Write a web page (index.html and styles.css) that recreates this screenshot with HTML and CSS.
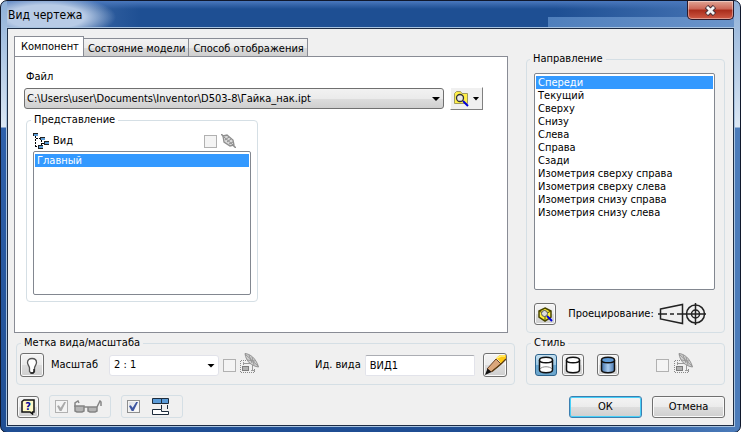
FILE: index.html
```
<!DOCTYPE html>
<html lang="ru">
<head>
    <meta charset="UTF-8">
    <meta name="viewport" content="width=device-width, initial-scale=1.0">
    <title>Вид чертежа</title>
    <link rel="stylesheet" href="styles.css">
</head>
<body>
    <!-- Shared icons -->
    <svg class="sprite" aria-hidden="true">
        <symbol id="icon-scale-link" viewBox="0 0 20 20">
            <path d="M1 7.500H6M1 19.500H15M.5 8V20M14.500 16V20" fill="none" stroke="#8a8a8a" stroke-dasharray="1 1"/>
            <path d="M3 10.500H11M3.500 9V12M12.500 11V18M11 17.500H15" fill="none" stroke="#9a9a9a"/>
            <rect x="2.500" y="13.500" width="6" height="4" fill="#b0b0b0" stroke="#7c7c7c"/>
            <path d="M5 .5C10 1 16 5 18.500 14C12 13 6 9 5 .5Z" fill="#d0d0d0" stroke="#929292"/>
            <path d="M5 1L18 13M9 2L12 10M12 4L14 12M7 7L15 8" fill="none" stroke="#989898"/>
        </symbol>
    </svg>

    <div class="window">
        <header class="titlebar">
            <h1>Вид чертежа</h1>
            <button class="close" type="button" aria-label="Закрыть">
                <svg width="13" height="11" viewBox="0 0 13 11">
                    <path d="M2.500 1.500L10.500 9.500M10.500 1.500L2.500 9.500" stroke="#4a3038" stroke-width="4.800"/>
                    <path d="M3 2L10 9M10 2L3 9" stroke="#f4f4f4" stroke-width="2.800"/>
                </svg>
            </button>
        </header>

        <form class="client">
            <section class="pages">
                <div class="tabs" role="tablist">
                    <button class="tab active" type="button" role="tab" aria-selected="true">Компонент</button>
                    <button class="tab" type="button" role="tab" aria-selected="false">Состояние модели</button>
                    <button class="tab" type="button" role="tab" aria-selected="false">Способ отображения</button>
                </div>
                <div class="page" role="tabpanel">
                    <label class="file-label" for="file">Файл</label>
                    <div class="file-row">
                        <div class="dropdown file">
                            <select id="file">
                                <option>C:\Users\user\Documents\Inventor\D503-8\Гайка_нак.ipt</option>
                            </select>
                        </div>
                        <button class="browse" type="button" aria-label="Обзор">
                            <svg width="15" height="16" viewBox="0 0 15 16">
                                <path d="M.5 12.500V2.500L2.500 .5H6.500L8 2.500H13.500V12.500Z" fill="#fff04a" stroke="#a09a60"/>
                                <circle cx="6" cy="7" r="3.500" fill="#e8e8e8" stroke="#333" stroke-width="1.300"/>
                                <path d="M9 10L14 15" stroke="#0000d8" stroke-width="2"/>
                            </svg>
                            <span class="arrow"></span>
                        </button>
                    </div>
                    <fieldset class="views">
                        <legend>Представление</legend>
                        <div class="views-head">
                            <svg width="16" height="16" viewBox="0 0 16 16">
                                <path d="M2.500 3V14.500M2 13.500H5M3 5.500H7M8.500 7V12M9 10.500H11" fill="none" stroke="#000" stroke-dasharray="2 1"/>
                                <path d="M0 0H5V3H0ZM7 4H12V7H7ZM11 8H16V12H11ZM5 12H10V16H5Z" fill="#222"/>
                                <path d="M1 1H5V3H1ZM8 5H12V7H8ZM12 9H16V11H12ZM6 13H10V15H6Z" fill="#5b9bd5"/>
                            </svg>
                            <label for="views">Вид</label>
                            <input class="push" type="checkbox" aria-label="Ассоциативно" disabled>
                            <svg width="15" height="14" viewBox="0 0 15 14">
                                <path d="M0 0L15 14" stroke="#8f8f8f" stroke-width="1.500"/>
                                <path d="M2 2L6 1L12 6L13 11L9 12L3 8Z" fill="#d8d8d8" stroke="#8f8f8f" stroke-width="1.300"/>
                                <path d="M3 3L12 11M4 6L8 3M6 8L10 5M8 10L12 8" stroke="#8f8f8f"/>
                            </svg>
                        </div>
                        <select class="list" id="views" size="2">
                            <option selected>Главный</option>
                        </select>
                    </fieldset>
                </div>
            </section>

            <fieldset class="direction">
                <legend>Направление</legend>
                <select class="list" size="11" aria-label="Направление">
                    <option selected>Спереди</option>
                    <option>Текущий</option>
                    <option>Сверху</option>
                    <option>Снизу</option>
                    <option>Слева</option>
                    <option>Справа</option>
                    <option>Сзади</option>
                    <option>Изометрия сверху справа</option>
                    <option>Изометрия сверху слева</option>
                    <option>Изометрия снизу справа</option>
                    <option>Изометрия снизу слева</option>
                </select>
                <div class="projection">
                    <button class="tool" type="button" aria-label="Изменить ориентацию вида">
                        <svg width="15" height="15" viewBox="0 0 15 15">
                            <path d="M7 1L13 4V10L7 14L1 10V4Z" fill="#ffef3a" stroke="#4a4600" stroke-width="1.500"/>
                            <path d="M1 4L7 7L13 4M7 7V14" fill="none" stroke="#4a4600"/>
                            <circle cx="6.500" cy="6.500" r="3" fill="#ddd" stroke="#555"/>
                            <path d="M9 9L14 14" stroke="#0000d8" stroke-width="2"/>
                        </svg>
                    </button>
                    <span>Проецирование:</span>
                    <svg width="48" height="22" viewBox="0 0 48 22" fill="none" stroke="#222" stroke-width="1.500">
                        <path d="M2.500 6L24.500 1.500V20.500L2.500 16Z"/>
                        <path d="M0 11H9M12 11H16M19 11H48M37.500 0V22"/>
                        <circle cx="37.500" cy="11" r="9"/>
                        <circle cx="37.500" cy="11" r="4"/>
                    </svg>
                </div>
            </fieldset>

            <fieldset class="labels">
                <legend>Метка вида/масштаба</legend>
                <div class="row">
                    <button class="tool big" type="button" aria-label="Видимость метки">
                        <svg width="12" height="17" viewBox="0 0 12 17">
                            <path d="M3.500 11C3.500 9 1.500 8 1.500 5.500C1.500 3 3.500 1.500 6 1.500S10.500 3 10.500 5.500C10.500 8 8.500 9 8.500 11V14.500L7 16H5L3.500 14.500Z" fill="#fff" stroke="#555" stroke-width="1.300"/>
                            <path d="M8 12V15L7 16H4.500" fill="none" stroke="#222" stroke-width="1.500"/>
                        </svg>
                    </button>
                    <label class="scale-label" for="scale">Масштаб</label>
                    <div class="dropdown scale">
                        <select id="scale">
                            <option>2 : 1</option>
                        </select>
                    </div>
                    <input class="scale-check" type="checkbox" aria-label="Масштаб по базовому виду" disabled>
                    <svg class="link-icon" width="20" height="20"><use href="#icon-scale-link"/></svg>
                    <label class="id-label" for="viewId">Ид. вида</label>
                    <input class="view-id" id="viewId" type="text" value="ВИД1">
                    <button class="tool big" type="button" aria-label="Редактировать метку">
                        <svg width="22" height="22" viewBox="0 0 22 22">
                            <path d="M3 15L12 5L17 10L7 18Z" fill="#dba77c" stroke="#6b4428"/>
                            <path d="M1 21L3.500 14.500L7.500 18Z" fill="#111"/>
                            <path d="M12 5C13 3 15 1 17 1H22V5L17 10C16 7 14 5 12 5Z" fill="#ffc814"/>
                            <path d="M22 5L17 10L8 17.500" fill="none" stroke="#5a3a10" stroke-width="1.300"/>
                            <path d="M13 4L17 2H21" fill="none" stroke="#fff07a" stroke-width="1.500"/>
                        </svg>
                    </button>
                </div>
            </fieldset>

            <fieldset class="style">
                <legend>Стиль</legend>
                <div class="row">
                    <button class="tool pressed" type="button" aria-label="Невидимые линии показаны" aria-pressed="true">
                        <svg width="16" height="18" viewBox="0 0 16 18" stroke="#111" stroke-width="1.500">
                            <path d="M1.500 4V14C1.500 17.500 14.500 17.500 14.500 14V4" fill="#fff"/>
                            <path d="M2 13C4 10 12 10 14 13" fill="none" stroke="#888" stroke-width="1"/>
                            <ellipse cx="8" cy="4" rx="6.500" ry="2.800" fill="#fff"/>
                        </svg>
                    </button>
                    <button class="tool" type="button" aria-label="Невидимые линии удалены" aria-pressed="false">
                        <svg width="16" height="18" viewBox="0 0 16 18" stroke="#111" stroke-width="1.500">
                            <path d="M1.500 4V14C1.500 17.500 14.500 17.500 14.500 14V4" fill="#fff"/>
                            <ellipse cx="8" cy="4" rx="6.500" ry="2.800" fill="#fff"/>
                        </svg>
                    </button>
                    <button class="tool shaded" type="button" aria-label="Тонированный" aria-pressed="false">
                        <svg width="16" height="18" viewBox="0 0 16 18" stroke="#111" stroke-width="1.500">
                            <linearGradient id="steel">
                                <stop offset="0" stop-color="#3f6fa8"/>
                                <stop offset=".5" stop-color="#a9cbee"/>
                                <stop offset="1" stop-color="#4678b2"/>
                            </linearGradient>
                            <path d="M1.500 4V14C1.500 17.500 14.500 17.500 14.500 14V4" fill="url(#steel)"/>
                            <ellipse cx="8" cy="4" rx="6.500" ry="2.800" fill="#5f9ad6"/>
                        </svg>
                    </button>
                    <input class="push" type="checkbox" aria-label="Стиль по базовому виду" disabled>
                    <svg class="link-icon" width="20" height="20"><use href="#icon-scale-link"/></svg>
                </div>
            </fieldset>

            <footer class="footer">
                <button class="tool" type="button" aria-label="Справка">
                    <svg width="15" height="16" viewBox="0 0 15 16">
                        <path d="M1 2.500L3 1H13V13H11.500V15L9 13H1Z" fill="#fffbc8" stroke="#111" stroke-width="1.500"/>
                        <text x="7" y="11" text-anchor="middle">?</text>
                    </svg>
                </button>
                <div class="option">
                    <input type="checkbox" aria-label="Предварительный просмотр" checked disabled>
                    <svg width="28" height="14" viewBox="0 0 28 14" fill="#b4b4b4" stroke="#858585" stroke-width="1.500">
                        <path d="M1 7V3L4 1L5 3M23 7L26 1L27 2V6" fill="none"/>
                        <path d="M1 6H10V11L8 12H3L1 11ZM14 7H23V11L21 12H16L14 11ZM10 7H14"/>
                    </svg>
                </div>
                <div class="option second">
                    <input type="checkbox" aria-label="Базовый вид" checked>
                    <svg width="17" height="17" viewBox="0 0 17 17" fill="#5a9bd8" stroke="#1d2c3c">
                        <path d="M.5 .5H9.500V5.500H.5ZM9.500 .5H16.500V5.500H9.500Z"/>
                        <path d="M9.500 7V11M15.500 7V11" fill="none"/>
                        <path d="M.5 11.500H9.500V13.500H16.500V16.500H.5Z" fill="#fff"/>
                    </svg>
                </div>
                <button class="push command default" type="submit">ОК</button>
                <button class="command" type="button">Отмена</button>
            </footer>
        </form>
    </div>
</body>
</html>
```
FILE: styles.css
```
* {
    box-sizing: border-box;
}

body {
    margin: 0;
    background-color: #fff;
    color: #000;
}

body,
button,
input,
select {
    font-family: "DejaVu Sans Condensed", "Open Sans", sans-serif;
    font-size: 11px;
    line-height: 14px;
}

button {
    display: flex;
    align-items: center;
    justify-content: center;
    padding: 0;
    color: #000;
}

.sprite {
    position: absolute;
    width: 0;
    height: 0;
}

/* Window frame */
.window {
    display: flex;
    flex-direction: column;
    min-height: 100vh;
    padding: 0 6px 6px;
    border: 1px solid #10182c;
    border-radius: 7px;
    background:
        linear-gradient(#8fb0d8, #dbe7f4 126px, #2f61ab 127px, #1f4e93) left / 6px 100% no-repeat,
        linear-gradient(#8fb0d8, #dbe7f4 126px, #4c7cba 127px, #4c7cba) right / 6px 100% no-repeat,
        linear-gradient(90deg, #1f4e93 75%, #4c7cba) bottom / 100% 7px no-repeat,
        radial-gradient(70px 22px at 45px 16px, #b8cbe6 55%, transparent) 0 0 / 140px 29px no-repeat,
        linear-gradient(90deg, #4f7fbc, #6c95cb) right 16px / 192px 13px no-repeat,
        linear-gradient(#4a78bd, transparent 8px),
        linear-gradient(90deg, #5f86bd, #1e4f93 140px, #1e4f93 75%, #4a78b8);
}

.titlebar {
    display: flex;
    justify-content: space-between;
    height: 27px;
}

.titlebar h1 {
    margin: 7px 1px;
    font-size: 12px;
    font-weight: normal;
}

.close {
    width: 47px;
    height: 19px;
    border: 1px solid #2b1a2a;
    border-top: none;
    border-radius: 0 0 5px 5px;
    background: linear-gradient(#e0a595, #cc6555 45%, #a92c1b 50%, #cf5a45);
    box-shadow: inset 0 0 0 1px rgba(255, 255, 255, 0.4);
}

.client {
    flex: 1;
    display: grid;
    grid-template-columns: 1fr 199px;
    grid-template-rows: 1fr auto auto;
    column-gap: 11px;
    row-gap: 3px;
    padding: 7px 8px 7px 8px;
    border: 1px solid #1d2c44;
    box-shadow: 0 0 0 1px #a8c3e0;
    background-color: #f0f0f0;
}

/* Tabs */
.pages {
    display: flex;
    flex-direction: column;
    margin: 0 7px 0 -2px;
}

.tabs {
    display: flex;
    align-items: flex-end;
}

.tab {
    height: 18px;
    padding: 2px 3px 0 4px;
    border: 1px solid #898c95;
    border-left: none;
    border-bottom: none;
    background: linear-gradient(#f3f3f3, #ebebeb 50%, #dcdcdc 52%, #cfcfcf);
}

.tab.active {
    height: 21px;
    margin-bottom: -1px;
    padding: 0 4px 0 6px;
    border-left: 1px solid #898c95;
    background: #fff;
}

.page {
    flex: 1;
    padding: 13px 24px 30px 9px;
    border: 1px solid #898c95;
    background-color: #fff;
}

.file-label {
    display: block;
    margin-left: 2px;
}

.file-row {
    display: flex;
    align-items: center;
    gap: 6px;
    margin-top: 3px;
}

.dropdown {
    position: relative;
}

.dropdown select {
    display: block;
    width: 100%;
    height: 21px;
    padding: 0 2px;
    border: 1px solid #707070;
    border-radius: 3px;
    background: linear-gradient(#f2f2f2, #ebebeb 50%, #dddddd 51%, #cfcfcf);
    color: #000;
    appearance: none;
}

.dropdown::after {
    content: "";
    position: absolute;
    top: 9px;
    right: 4px;
    width: 8px;
    height: 4px;
    background-color: #000;
    clip-path: polygon(0 0, 100% 0, 50% 100%);
    pointer-events: none;
}

.file {
    flex: 1;
}

.browse {
    gap: 4px;
    width: 33px;
    height: 23px;
    border: 1px solid #fff;
    border-right-color: #808080;
    border-bottom-color: #808080;
    background-color: #f0f0f0;
}

.arrow {
    width: 7px;
    height: 4px;
    background-color: #000;
    clip-path: polygon(0 0, 100% 0, 50% 100%);
}

/* Groups */
fieldset {
    min-width: 0;
    margin: 0;
    padding: 0;
    border: 1px solid #d5dfe5;
    border-radius: 4px;
}

legend {
    height: 14px;
    margin-left: 4px;
    padding: 0 3px;
}

.views {
    width: 232px;
    margin: 3px 0 0 2px;
    padding: 6px;
}

.views legend {
    margin-left: -2px;
}

.direction legend {
    margin-left: -4px;
}

.views-head {
    display: flex;
    align-items: center;
    gap: 4px;
    height: 16px;
    margin-right: 15px;
}

.list {
    display: block;
    width: 100%;
    padding: 2px 1px;
    border: 1px solid #828790;
    background-color: #fff;
    color: #000;
    overflow: hidden;
}

.list option {
    min-height: 13px;
    height: 13px;
    padding: 0 2px;
    line-height: 14px;
}

.list option:checked {
    background: linear-gradient(#3399ff, #3399ff);
    color: #fff;
}

.views .list {
    height: 144px;
    margin-top: 2px;
}

.direction {
    display: flex;
    flex-direction: column;
    margin-top: 16px;
    padding: 7px 9px 7px 7px;
}

.direction .list {
    flex: 1;
}

.projection {
    display: flex;
    align-items: center;
    justify-content: space-between;
    margin-top: 13px;
    padding-right: 9px;
}

.projection span {
    margin-left: 8px;
}

.row {
    display: flex;
    align-items: center;
}

.labels .row {
    padding: 3px 7px 7px 3px;
}

.style .row {
    gap: 5px;
    padding: 4px 30px 7px 8px;
}

.tool {
    flex: none;
    width: 22px;
    height: 22px;
    border: 1px solid #707070;
    border-radius: 3px;
    background: linear-gradient(#f4f4f4, #ebebeb 50%, #dddddd 51%, #cfcfcf);
    box-shadow: inset 0 0 0 1px #fafafa;
}

.tool.big {
    width: 24px;
    height: 24px;
}

.tool.pressed {
    border-color: #2c628b;
    background: linear-gradient(#c5e0f0, #98c6e4 50%, #6ba8d2 51%, #6ca6cc);
    box-shadow: none;
}

.tool.shaded {
    margin-left: 8px;
}

.tool text {
    font-size: 11px;
    font-weight: bold;
    fill: #0a0a9c;
}

/* Check boxes */
input[type="checkbox"] {
    flex: none;
    display: grid;
    place-items: center;
    width: 13px;
    height: 13px;
    margin: 0;
    border: 1px solid #8e8f8f;
    background: linear-gradient(135deg, #d8dce2, #fff);
    box-shadow: inset 0 0 0 1px #f4f4f4;
    appearance: none;
}

input[type="checkbox"]:disabled {
    border-color: #b1b1b1;
    background: #f4f4f4;
}

input[type="checkbox"]:checked::before {
    content: "";
    width: 9px;
    height: 9px;
    background-color: #3d55a0;
    clip-path: polygon(0 45%, 20% 35%, 40% 65%, 80% 0, 100% 0, 50% 100%, 30% 100%);
}

input[type="checkbox"]:disabled:checked::before {
    background-color: #aaa;
}

.push,
input[type="checkbox"].push {
    margin-left: auto;
}

/* Scale and view label */
.scale-label {
    width: 58px;
    margin-left: 7px;
}

.scale {
    flex: 0 1 110px;
}

.dropdown.scale select {
    padding: 0 4px;
    border-color: #e2e3ea;
    background: #fff;
}

input[type="checkbox"].scale-check {
    margin: 0 4px 0 4px;
}

.id-label {
    margin: 0 4px 0 55px;
}

.view-id {
    flex: 1;
    min-width: 0;
    height: 21px;
    margin-right: 8px;
    padding: 0 4px;
    border: 1px solid #e2e3ea;
    border-top-color: #abadb3;
    border-radius: 2px;
}

.link-icon {
    margin-top: -4px;
}

/* Footer */
.footer {
    grid-column: 1 / 3;
    display: flex;
    align-items: center;
    margin-top: 7px;
    padding-left: 1px;
}

.option {
    display: flex;
    align-items: center;
    gap: 6px;
    width: 62px;
    height: 23px;
    margin-left: 10px;
    padding-left: 5px;
    border: 1px solid #d5dfe5;
    border-radius: 3px;
}

.option.second {
    gap: 12px;
}

.command {
    width: 73px;
    height: 22px;
    border: 1px solid #707070;
    border-radius: 3px;
    background: linear-gradient(#f4f4f4, #ebebeb 50%, #dddddd 51%, #cfcfcf);
    box-shadow: inset 0 0 0 1px #fafafa;
}

.command.default {
    margin-right: 10px;
    border-color: #3c7fb1;
    box-shadow: inset 0 0 0 1px #48d0f8;
}
```
